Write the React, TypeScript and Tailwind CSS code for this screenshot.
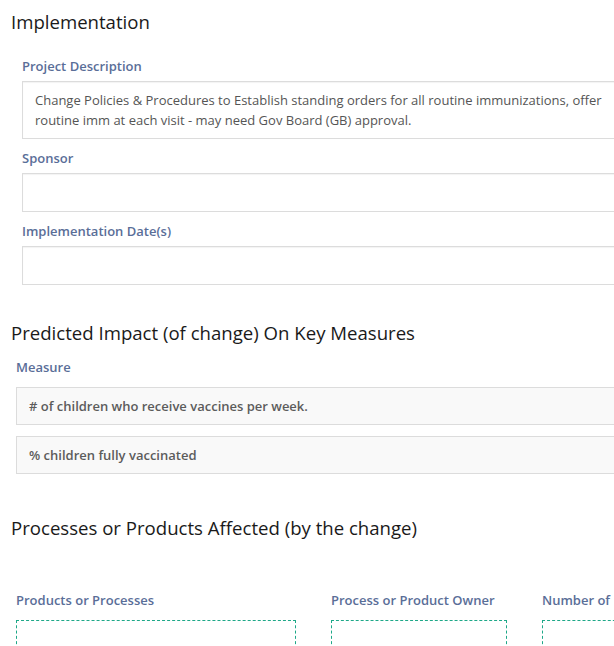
const labelCls = "block whitespace-nowrap text-[13px] leading-[18px] font-semibold text-[#5a6e98]"
const headingCls = "text-[18.6px] leading-[26px] font-normal text-[#1a1a1a]"

function Label({ children, className = "" }: { children: React.ReactNode; className?: string }) {
  return <div className={`${labelCls} ${className}`}>{children}</div>
}

function Field({ label, children, first = false }: { label: string; children?: React.ReactNode; first?: boolean }) {
  return (
    <div className={first ? "mt-[22px]" : "mt-[10px]"}>
      <Label>{label}</Label>
      <div
        className={`mt-[6px] border border-[#dcdcdc] bg-white px-[12px] py-[8px] text-[13px] leading-[20px] text-[#555] shadow-[inset_0_1px_1px_rgba(0,0,0,0.05)] ${
          children ? "" : "h-[39px]"
        }`}
      >
        {children}
      </div>
    </div>
  )
}

function MeasureRow({ text, className = "" }: { text: string; className?: string }) {
  return (
    <div
      className={`h-[38px] border border-[#dcdcdc] bg-[#f9f9f9] px-[12px] text-[13px] leading-[37px] font-semibold text-[#5c5c5c] ${className}`}
    >
      {text}
    </div>
  )
}

function AffectedColumn({ label, width }: { label: string; width: string }) {
  return (
    <div className={`shrink-0 ${width}`}>
      <Label>{label}</Label>
      <div className="mt-[11px] h-[40px] border border-dashed border-[#1ea888]" />
    </div>
  )
}

export default function App() {
  return (
    <div className="h-[646px] w-full overflow-hidden bg-white font-['Open_Sans','Noto_Sans',sans-serif]">
      <div className="w-[720px] pl-[11px] pt-[9px]">
        <h2 className={headingCls}>Implementation</h2>

        <div className="pl-[11px]">
          <Field label="Project Description" first>
            Change Policies &amp; Procedures to Establish standing orders for all routine immunizations, offer
            <br />
            routine imm at each visit - may need Gov Board (GB) approval.
          </Field>
          <Field label="Sponsor" />
          <Field label="Implementation Date(s)" />
        </div>

        <h2 className={`mt-[35px] ${headingCls}`}>Predicted Impact (of change) On Key Measures</h2>

        <div className="pl-[5px]">
          <Label className="mt-[12px]">Measure</Label>
          <MeasureRow className="mt-[11px]" text="# of children who receive vaccines per week." />
          <MeasureRow className="mt-[11px]" text="% children fully vaccinated" />
        </div>

        <h2 className={`mt-[41px] ${headingCls}`}>Processes or Products Affected (by the change)</h2>

        <div className="mt-[50px] flex pl-[5px]">
          <AffectedColumn label="Products or Processes" width="w-[280px]" />
          <div className="ml-[35px]">
            <AffectedColumn label="Process or Product Owner" width="w-[176px]" />
          </div>
          <div className="ml-[35px]">
            <AffectedColumn label="Number of People Affected" width="w-[170px]" />
          </div>
        </div>
      </div>
    </div>
  )
}
